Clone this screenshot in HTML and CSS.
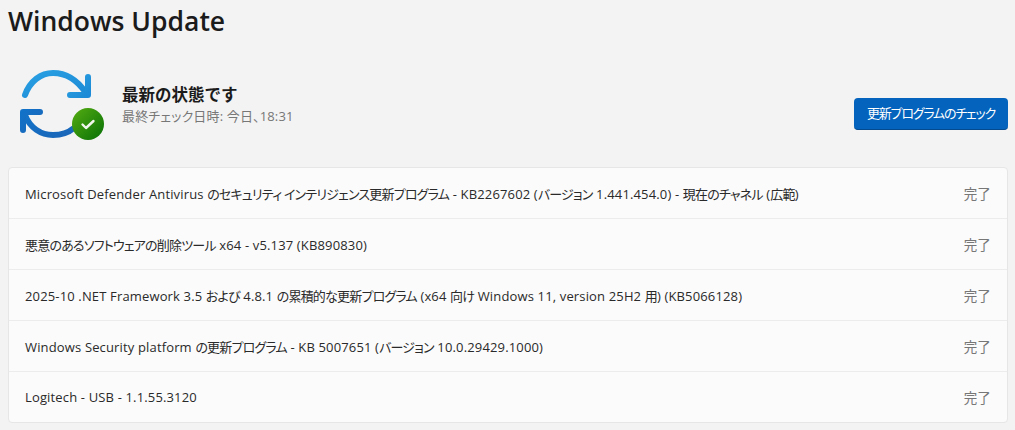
FILE: index.html
```html
<!DOCTYPE html>
<html lang="ja">
<head>
	<meta charset="utf-8">
	<title>Windows Update</title>
	<link rel="stylesheet" href="styles.css">
</head>
<body>
	<h1 class="pageTitle">Windows Update</h1>

	<div class="statusRow">
		<svg class="statusIcon" width="96" height="72" viewBox="0 0 96 72" fill="none">
			<defs>
				<linearGradient id="topArc" x1="0" y1="0" x2="1" y2="1">
					<stop offset="0" stop-color="#2aa0e2"/>
					<stop offset="1" stop-color="#1c8ad6"/>
				</linearGradient>
				<linearGradient id="bottomArc" x1="0" y1="0" x2="1" y2="1">
					<stop offset="0" stop-color="#1272c8"/>
					<stop offset="1" stop-color="#1a66b8"/>
				</linearGradient>
				<linearGradient id="badge" x1="0" y1="0" x2="1" y2="1">
					<stop offset="0" stop-color="#56ad12"/>
					<stop offset="1" stop-color="#066f06"/>
				</linearGradient>
			</defs>
			<path d="M9 27C14 13 25 5 37 5C51 5 62 13 70 25" stroke="url(#topArc)" stroke-width="6" stroke-linecap="round"/>
			<path d="M72 9V27H54" stroke="url(#topArc)" stroke-width="6" stroke-linecap="round" stroke-linejoin="round"/>
			<path d="M9 47C14 60 25 67 37 67C45 67 52 65 58 60" stroke="url(#bottomArc)" stroke-width="6" stroke-linecap="round"/>
			<path d="M24 44H7V62" stroke="url(#bottomArc)" stroke-width="6" stroke-linecap="round" stroke-linejoin="round"/>
			<circle cx="72" cy="56" r="16" fill="url(#badge)"/>
			<path d="M66.5 56.5L70 60L77.5 53" stroke="#f2f7ee" stroke-width="2.4" stroke-linecap="round" stroke-linejoin="round"/>
		</svg>
		<div class="statusText">
			<div class="statusTitle">最新の状態です</div>
			<div class="statusSub">最終チェック日時: 今日、18:31</div>
		</div>
		<div class="checkBtn">更新プログラムのチェック</div>
	</div>

	<ul class="updateList">
		<li>
			<span>Microsoft Defender Antivirus <span class="ja">のセキュリティ インテリジェンス更新プログラム</span> - KB2267602 (<span class="ja">バージョン</span> 1.441.454.0) - <span class="ja">現在のチャネル</span> (<span class="ja">広範</span>)</span>
			<span class="state">完了</span>
		</li>
		<li>
			<span><span class="ja">悪意のあるソフトウェアの削除ツール</span> x64 - v5.137 (KB890830)</span>
			<span class="state">完了</span>
		</li>
		<li>
			<span>2025-10 .NET Framework 3.5 <span class="ja">および</span> 4.8.1 <span class="ja">の累積的な更新プログラム</span> (x64 <span class="ja">向け</span> Windows 11, version 25H2 <span class="ja">用</span>) (KB5066128)</span>
			<span class="state">完了</span>
		</li>
		<li>
			<span>Windows Security platform <span class="ja">の更新プログラム</span> - KB 5007651 (<span class="ja">バージョン</span> 10.0.29429.1000)</span>
			<span class="state">完了</span>
		</li>
		<li>
			<span>Logitech - USB - 1.1.55.3120</span>
			<span class="state">完了</span>
		</li>
	</ul>
</body>
</html>
```
FILE: styles.css
```css
*{
	padding:0;
	margin:0;
	box-sizing: border-box;
}
html,body{
	height:430px;
	overflow: hidden;
}
body{
	background-color: #f3f3f3;
	color: #1b1b1b;
	font-family: "Open Sans", "Noto Sans CJK JP", sans-serif;
	font-size: 13px;
	font-feature-settings: "palt";
	padding: 0 7px 0 8px;
}
.pageTitle{
	font-size: 26.5px;
	font-weight: 600;
	line-height: 34px;
	padding-top: 4px;
	height: 39px;
}
.statusRow{
	display: flex;
	align-items: center;
	height: 128px;
	padding-left: 8px;
}
.statusIcon{
	flex: none;
	margin-top: 1px;
}
.statusText{
	flex: 1;
	margin-left: 10px;
	margin-top: 3px;
}
.statusTitle{
	font-size: 16.5px;
	font-weight: 700;
	line-height: 22px;
	font-feature-settings: normal;
}
.statusSub{
	font-size: 13px;
	letter-spacing: 0.15px;
	line-height: 20px;
	color: #777;
}
.checkBtn{
	flex: none;
	align-self: flex-end;
	width: 154px;
	height: 32px;
	line-height: 31px;
	margin-bottom: 37px;
	text-align: center;
	font-size: 13px;
	letter-spacing: -1.2px;
	color: #fff;
	background-color: #0463bd;
	border-bottom: 1px solid #034a8e;
	border-radius: 4px;
}
.updateList{
	list-style: none;
	background-color: #fbfbfb;
	border: 1px solid #e6e6e6;
	border-radius: 4px;
}
.updateList li{
	display: flex;
	justify-content: space-between;
	align-items: center;
	height: 51px;
	padding: 0 16px 0 16px;
	border-bottom: 1px solid #ececec;
	font-size: 13px;
	letter-spacing: 0.15px;
	color: #2a2a2a;
}
.updateList li:last-child{
	border-bottom: 0;
	height: 50px;
}
.ja{
	letter-spacing: -0.8px;
}
.state{
	color: #777;
	font-size: 13.5px;
}
```
